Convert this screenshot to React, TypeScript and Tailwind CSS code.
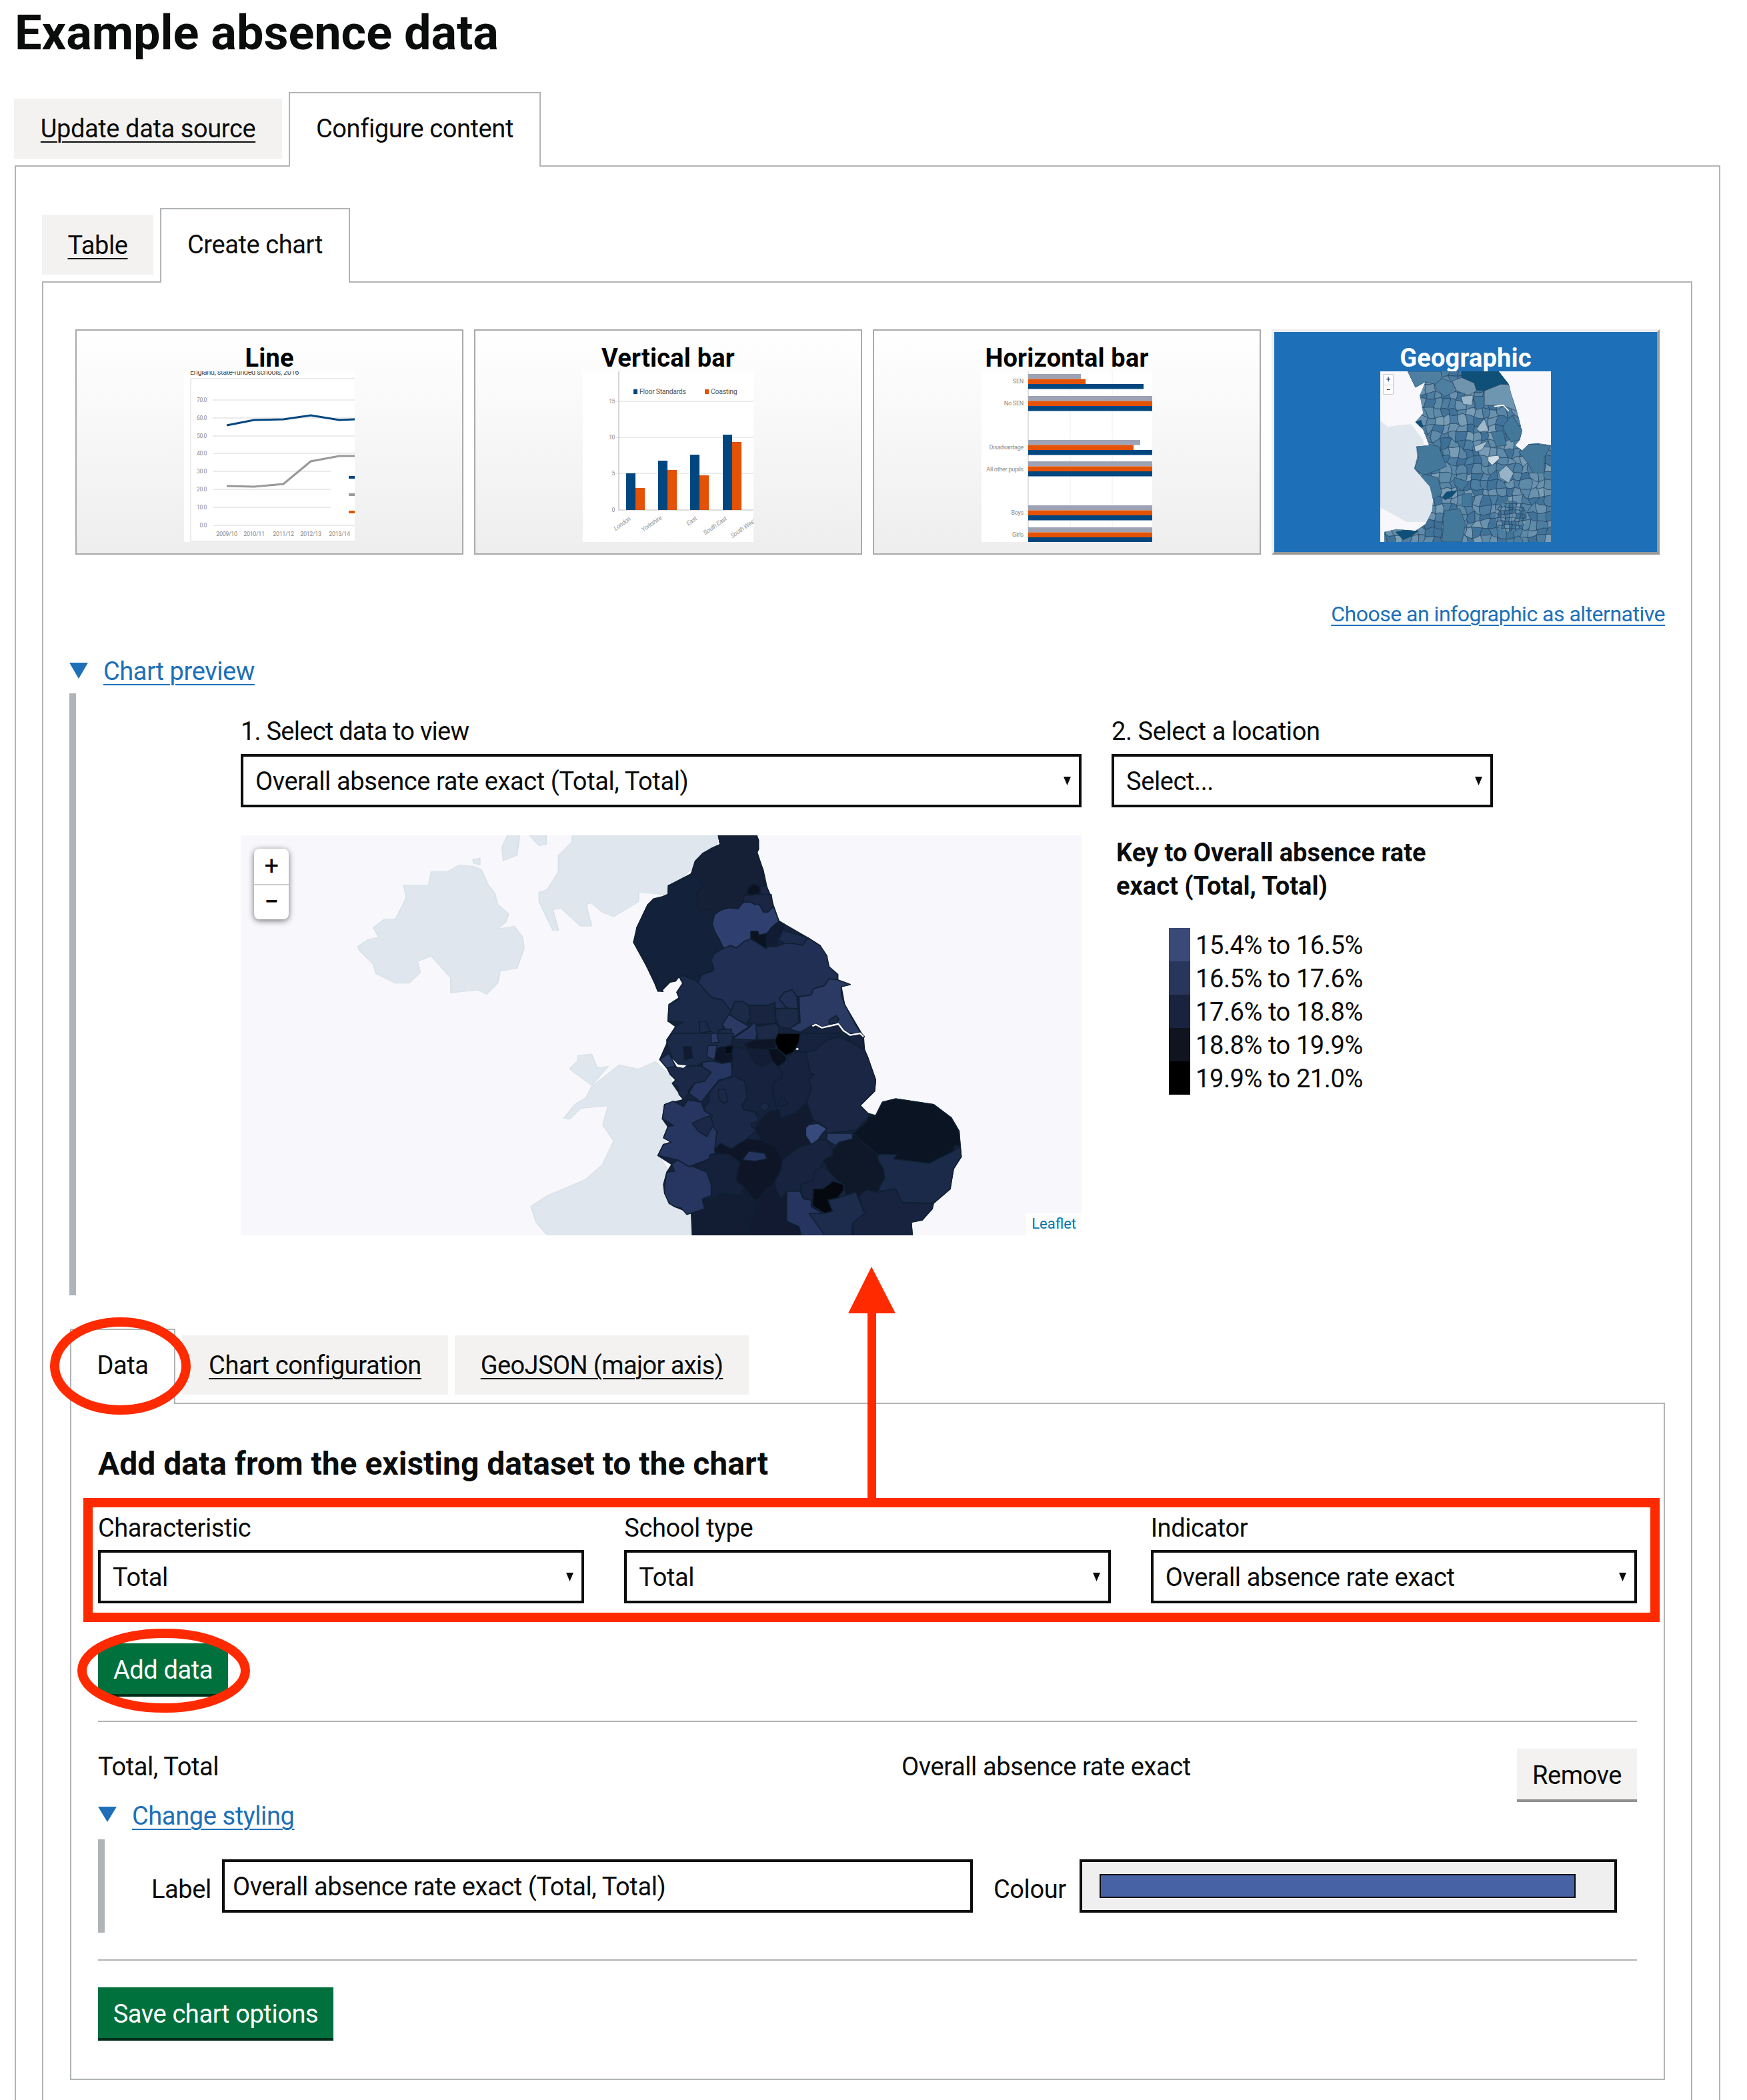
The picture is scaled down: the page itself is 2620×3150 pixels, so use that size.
import React from "react";

const ink = "text-[#0b0c0c]";

function Tri({ className }: { className?: string }) {
  return (
    <svg viewBox="0 0 28 24" preserveAspectRatio="none" className={className}>
      <polygon points="0,0 28,0 14,24" fill="#1d70b8" />
    </svg>
  );
}

function SelectBox({ value, className }: { value: string; className?: string }) {
  return (
    <div className={`flex h-[80px] items-center justify-between border-4 border-[#0b0c0c] bg-white pl-[18px] pr-[12px] text-[38px] ${className ?? ""}`}>
      <span className="pt-[2px]">{value}</span>
      <svg viewBox="0 0 11 13" className="h-[13px] w-[11px]">
        <polygon points="0,0 11,0 5.5,13" fill="#0b0c0c" />
      </svg>
    </div>
  );
}

/* ---------- thumbnails ---------- */
function LineThumb() {
  const grid: [string, number, number][] = [
    ["70.0", 43, 256], ["60.0", 70, 256], ["50.0", 97, 256], ["40.0", 123, 256],
    ["30.0", 150, 220], ["20.0", 177, 220], ["10.0", 204, 220], ["0.0", 231, 256],
  ];
  return (
    <svg viewBox="0 0 256 256" className="h-[256px] w-[256px] bg-white">
      <text x="9" y="4.5" fontSize="11" fill="#444">England, state-funded schools, 2016</text>
      <path d="M10 11H256M10 11V255H256" fill="none" stroke="#e6e6e6" strokeWidth="1.5" />
      {grid.map(([t, y, x2]) => (
        <g key={t}>
          <line x1="43" x2={x2} y1={y} y2={y} stroke="#e4e4e4" strokeWidth="1.5" />
          <text x="34" y={y + 3} fontSize="8.5" fill="#8a8a8a" textAnchor="end">{t}</text>
        </g>
      ))}
      <polyline points="64,81 105,73 149,72 190,66 233,73 256,72" fill="none" stroke="#00467f" strokeWidth="3" />
      <polyline points="64,172 105,173 149,169 190,135 233,127 256,127" fill="none" stroke="#999" strokeWidth="3.2" />
      <rect x="247" y="157" width="9" height="4" fill="#00467f" />
      <rect x="247" y="183" width="9" height="4" fill="#999" />
      <rect x="247" y="209" width="9" height="4" fill="#e35205" />
      {[["2009/10", 64], ["2010/11", 105], ["2011/12", 149], ["2012/13", 190], ["2013/14", 233]].map(([t, x]) => (
        <text key={t as string} x={x as number} y="247" fontSize="9" fill="#8a8a8a" textAnchor="middle">{t}</text>
      ))}
    </svg>
  );
}

function VerticalThumb() {
  const bars = [
    [65, 153, 175], [113, 134, 148], [161, 125, 156], [210, 95, 106],
  ];
  const labels: [string, number, number][] = [
    ["London", 61, 231], ["Yorkshire", 105, 231], ["East", 165, 227], ["South East", 200, 234], ["South West", 242, 238],
  ];
  return (
    <svg viewBox="0 0 256 256" className="h-[256px] w-[256px] overflow-hidden bg-white">
      {[[45, "15"], [99, "10"], [153, "5"]].map(([y, t]) => (
        <g key={t as string}>
          <line x1="50" x2="256" y1={y as number} y2={y as number} stroke="#e6e6e6" strokeWidth="1.5" />
          <text x="48" y={(y as number) + 3} fontSize="8.5" fill="#888" textAnchor="end">{t}</text>
        </g>
      ))}
      <text x="48" y="211" fontSize="8.5" fill="#888" textAnchor="end">0</text>
      <path d="M54 0V208H256" fill="none" stroke="#bbb" strokeWidth="1.2" />
      <rect x="76" y="27" width="6" height="7" fill="#00467f" />
      <text x="85" y="34" fontSize="10.5" letterSpacing="-0.3" fill="#555">Floor Standards</text>
      <rect x="183" y="27" width="6" height="7" fill="#e35205" />
      <text x="192" y="34" fontSize="10.5" letterSpacing="-0.3" fill="#555">Coasting</text>
      {bars.map(([x, a, b]) => (
        <g key={x}>
          <rect x={x} y={a} width="14" height={208 - a} fill="#00467f" />
          <rect x={x + 14} y={b} width="14" height={208 - b} fill="#e35205" />
        </g>
      ))}
      {labels.map(([t, x, y]) => (
        <text key={t} x={x} y={y} fontSize="9.5" fill="#999" fontStyle="italic" textAnchor="middle" transform={`rotate(-35 ${x} ${y})`}>{t}</text>
      ))}
    </svg>
  );
}

function HorizontalThumb() {
  const groups: [number, number, number, number][] = [
    [4, 79, 86, 173], [37, 186, 186, 186], [103, 168, 158, 186], [135, 186, 186, 186], [201, 186, 186, 186], [234, 186, 186, 186],
  ];
  const labels: [string, number][] = [
    ["SEN", 18], ["No SEN", 51], ["Disadvantage", 117], ["All other pupils", 150], ["Boys", 215], ["Girls", 248],
  ];
  return (
    <svg viewBox="0 0 256 256" className="h-[256px] w-[256px] overflow-hidden bg-white">
      <path d="M133 0V256M196 0V256" stroke="#eee" strokeWidth="1" />
      <line x1="70" x2="70" y1="0" y2="256" stroke="#ccc" strokeWidth="1.2" />
      {groups.map(([y, a, b, c]) => (
        <g key={y}>
          <rect x="70" y={y} width={a} height="7.5" fill="#9ea2b5" />
          <rect x="70" y={y + 7.5} width={b} height="7.5" fill="#e35205" />
          <rect x="70" y={y + 15} width={c} height="7.5" fill="#00467f" />
        </g>
      ))}
      {labels.map(([t, y]) => (
        <text key={t} x="63" y={y} fontSize="9" letterSpacing="-0.25" fill="#888" textAnchor="end">{t}</text>
      ))}
    </svg>
  );
}

const h = (a: number, b: number, s: number) => {
  const v = Math.sin(a * 127.1 + b * 311.7 + s * 74.7) * 43758.5453;
  return v - Math.floor(v);
};

function Cells({ s, x0, y0, nx, ny, seed }: { s: number; x0: number; y0: number; nx: number; ny: number; seed: number }) {
  const palette = ["#41739a", "#5f8aa8", "#6a91ad", "#4d7da0", "#41739a", "#3f7097", "#7a9db6", "#5a86a6", "#6a91ad", "#4d7da0"];
  const V = (i: number, j: number) => [x0 + i * s + (h(i, j, seed) - 0.5) * s * 0.6, y0 + j * s + (h(j, i, seed + 1) - 0.5) * s * 0.6];
  const mid = (a: number[], b: number[], k: number) => {
    const t = (h(k, k + 3, seed + 2) - 0.5) * s * 0.35;
    return `${(a[0] + b[0]) / 2 + t},${(a[1] + b[1]) / 2 - t}`;
  };
  const out: React.ReactNode[] = [];
  for (let i = 0; i < nx; i++) {
    for (let j = 0; j < ny; j++) {
      const a = V(i, j), b = V(i + 1, j), c = V(i + 1, j + 1), d = V(i, j + 1);
      const top = mid(a, b, i * 61 + j);
      const bottom = mid(d, c, i * 61 + j + 1);
      const left = mid(a, d, i * 37 + j * 3 + 900);
      const right = mid(b, c, (i + 1) * 37 + j * 3 + 900);
      const pts = `${a} ${top} ${b} ${right} ${c} ${bottom} ${d} ${left}`;
      out.push(<polygon key={`${i}-${j}`} points={pts} fill={palette[Math.floor(h(i, j, seed + 5) * palette.length)]} stroke="#24425e" strokeWidth="2" strokeLinejoin="round" />);
    }
  }
  return <>{out}</>;
}

function GeoThumb() {
  const england = "135,12 545,12 590,70 600,110 628,195 650,280 640,320 620,345 650,368 680,340 720,335 780,345 780,780 30,780 30,735 85,722 170,730 215,700 245,640 250,590 235,530 165,450 178,400 175,350 232,345 205,275 170,240 205,200 190,120 215,60 170,85";
  const big: [string, string][] = [
    ["#0f5078", "378,12 545,12 590,70 555,70 490,100 440,95 435,65 378,40"],
    ["#4f7fa0", "135,12 285,12 290,45 258,70 215,60 170,85"],
    ["#4f7fa0", "258,70 290,45 335,60 355,100 300,125 265,90"],
    ["#7094ae", "335,55 378,40 435,65 445,100 410,120 355,100"],
    ["#6f96b0", "480,100 555,70 590,72 625,190 575,170 530,165 480,165"],
    ["#44789b", "430,125 480,125 478,175 445,185"],
    ["#9cb7c9", "375,125 430,120 425,165 385,160"],
    ["#44789b", "570,250 605,210 650,280 640,320 600,330 565,270"],
    ["#9fb9ca", "445,270 480,225 500,280 460,285"],
    ["#44789b", "510,285 565,280 580,345 535,350"],
    ["#cfdde6", "497,395 545,390 548,405 515,435 497,415"],
    ["#97b3c7", "545,465 580,435 612,470 590,515 550,490"],
    ["#a5bdcd", "435,350 495,325 470,365 440,375"],
    ["#44789b", "175,350 230,340 275,350 290,390 310,440 260,460 210,480 165,450 185,400"],
    ["#44789b", "180,500 210,475 270,490 290,560 250,590 200,570"],
    ["#0f5078", "290,580 310,555 358,548 335,575 305,590"],
    ["#0f5078", "82,735 130,725 185,730 150,755 115,770"],
    ["#0f5078", "170,240 195,232 205,262 182,262"],
    ["#44789b", "635,375 680,340 780,345 750,400 750,470 700,470 680,430"],
    ["#44789b", "300,640 370,630 395,700 380,780 290,780"],
    ["#44789b", "380,565 425,560 425,620 380,620"],
    ["#44789b", "345,490 410,510 380,550 345,520"],
  ];
  return (
    <div className="relative h-[256px] w-[256px] overflow-hidden">
      <svg viewBox="12 12 768 768" className="block h-[256px] w-[256px] bg-[#f7f7fc]">
        <clipPath id="eng"><polygon points={england} /></clipPath>
        <polygon points="12,235 45,262 95,255 150,250 205,320 235,530 250,590 245,640 215,690 130,690 60,650 12,625" fill="#dfe6ee" />
        <g clipPath="url(#eng)">
          <rect x="12" y="12" width="768" height="768" fill="#5f8aa8" />
          <Cells s={36} x0={0} y0={0} nx={24} ny={24} seed={3} />
          <g>
            <clipPath id="ldn"><circle cx="600" cy="665" r="70" /></clipPath>
            <g clipPath="url(#ldn)"><Cells s={16} x0={510} y0={575} nx={12} ny={12} seed={9} /></g>
          </g>
          {big.map(([f, p], i) => (
            <polygon key={i} points={p} fill={f} stroke="#24425e" strokeWidth="2" strokeLinejoin="round" />
          ))}
        </g>
        <polyline points="525,170 565,165 590,190" fill="none" stroke="#fff" strokeWidth="5" />
      </svg>
      <div className="absolute left-[4px] top-[4px] flex h-[31px] w-[16px] flex-col rounded-[1px] border border-[#ccc] bg-white text-center text-[12px] leading-[15px] text-[#222]">
        <span>+</span>
        <span className="border-t border-[#ccc]">−</span>
      </div>
    </div>
  );
}

function Card({ title, active, children }: { title: string; active?: boolean; children: React.ReactNode }) {
  return (
    <div
      className={`flex h-[338px] w-[582px] shrink-0 flex-col items-center ${
        active
          ? "border-4 border-t-[#eeeeee] border-l-[#eeeeee] border-r-[#999999] border-b-[#999999] bg-[#1d70b8] pt-[8px] text-white"
          : "border-2 border-[#aaaaaa] bg-linear-to-b from-white to-[#eeeeee] pt-[10px] text-black"
      }`}
    >
      <div className="h-[51px] text-[38px] font-bold leading-[62px] tracking-[0.2px]">{title}</div>
      {children}
    </div>
  );
}

/* ---------- big map ---------- */
const england =
  "382,-890 555,-890 563,-830 556,-815 585,-730 600,-660 655,-505 785,-430 840,-395 880,-300 920,-240 975,-220 935,-210 950,-130 1035,15 1040,75 1055,110 1090,210 1085,260 1020,325 1055,360 1090,370 1120,310 1180,295 1350,320 1430,380 1465,440 1475,555 1440,610 1425,700 1350,765 1300,840 1250,850 1255,910 265,910 260,810 185,780 140,720 135,680 150,625 172,590 110,550 135,500 170,490 135,470 155,420 130,385 140,320 225,298 175,225 190,210 150,155 118,118 150,45 150,30 190,-30 155,-55 160,-130 205,-160 195,-185 222,-225 205,-255 165,-230 130,-195 110,-190 98,-220 60,-300 0,-410 15,-475 65,-580 155,-625 157,-665 260,-718 278,-775 312,-810 350,-832 390,-850";

const z9: [string, string][] = [
  ["#151f35", "382,10 555,10 563,30 563,70 556,85 566,120 585,170 578,185 597,235 565,240 540,225 515,250 497,280 495,310 470,340 430,335 395,345 365,365 335,340 303,355 278,315 292,295 282,262 315,240 312,225 285,200 260,182 278,125 312,90 350,82 350,68 390,50"],
  ["#14213a", "260,182 285,200 312,225 315,240 282,262 292,295 278,315 303,355 335,340 365,365 355,405 365,440 388,480 405,518 365,540 350,570 362,612 350,620 290,640 262,655 225,640 205,645 190,665 165,670 165,650 130,705 133,712 110,710 98,680 108,640 95,645 60,600 60,570 0,490 15,470 15,425 65,320 90,295 130,285 155,275 157,235 185,235"],
  ["#1a2644", "565,240 597,235 615,275 575,275"],
  ["#1a2644", "497,280 530,278 570,275 620,275 628,325 605,355 585,355 565,320 545,320 525,310 495,310"],
  ["#0b1222", "515,250 540,225 570,240 568,270 530,278 510,270"],
  ["#2f4070", "365,365 395,345 430,335 470,340 495,310 525,310 545,320 565,320 585,355 605,355 630,330 655,395 625,420 600,450 565,460 530,440 528,475 500,485 465,515 435,505 405,518 388,480 365,440 355,405"],
  ["#1c2a4b", "672,435 785,470 760,505 715,495 680,495 650,480"],
  ["#111b33", "600,450 625,420 655,395 680,410 672,440 650,480 645,510 600,510 598,470"],
  ["#0b1222", "528,440 560,440 565,458 600,450 598,520 580,510 560,495 528,475"],
  ["#202f53", "365,540 405,518 435,505 465,515 500,485 528,475 560,495 598,520 600,510 645,510 680,495 715,495 760,505 785,470 840,505 870,550 880,600 920,635 920,660 880,655 860,685 810,700 800,728 735,735 715,705 680,715 655,745 690,787 640,790 635,760 605,775 520,775 490,755 455,755 440,800 400,750 355,740 320,705 290,670 310,635 355,620 362,612 350,570"],
  ["#2a3a63", "920,660 975,680 935,690 935,730 950,770 1010,880 1035,915 1020,900 960,900 920,860 840,875 810,860 750,895 700,880 750,850 745,735 800,728 810,700 860,685 880,655"],
  ["#202f53", "655,745 680,715 715,705 735,735 740,790 690,787"],
  ["#1c2947", "690,787 740,790 745,850 700,880 655,870 640,830 640,790"],
  ["#182440", "520,775 605,775 635,760 640,830 640,855 560,860 520,850 525,830"],
  ["#1c2947", "440,800 455,755 490,755 520,775 525,830 505,860 470,840 430,815"],
  ["#1c2a4a", "160,770 208,745 195,715 222,675 205,645 225,640 262,655 290,670 320,705 355,740 400,750 440,800 400,860 405,880 370,930 150,930 190,870 220,850 155,845"],
  ["#1c2a4a", "295,845 325,845 345,890 300,900"],
  ["#374a7b", "345,890 370,905 370,930 345,930"],
  ["#2a3a63", "400,860 430,815 470,840 505,860 520,870 445,920 410,875"],
  ["#263560", "445,925 520,875 545,850 560,880 550,930"],
  ["#1c2a4a", "380,885 440,880 445,920 400,930"],
  ["#1c2947", "550,870 640,855 655,875 650,930 560,930"],
  ["#17223e", "750,930 805,875 850,880 920,865 975,930"],
  ["#1c2947", "880,840 910,820 925,835 915,855 880,858"],
];

const z10: [string, string][] = [
  ["#1a2643", "775,85 745,80 750,60 870,30 930,15 1040,75 1055,110 1090,210 1085,260 1020,325 1055,360 1060,375 1000,435 870,450 855,425 840,405 808,390 780,310 800,250 790,210 812,185 795,180 790,150"],
  ["#17223e", "745,40 750,0 930,0 935,10 870,30 820,75 775,85 745,80"],
  ["#1c2a4a", "150,45 175,0 450,0 440,50 390,70 360,125 310,130 290,145 230,150 190,130 170,100"],
  ["#111a30", "225,60 260,60 265,110 230,120"],
  ["#2a3a63", "350,0 375,0 385,40 350,45"],
  ["#2a3a63", "335,55 375,55 365,120 330,105"],
  ["#2a3a63", "118,118 160,90 170,110 190,150 150,155"],
  ["#273660", "310,130 360,125 395,135 440,130 445,190 410,205 385,210 340,265 305,310 250,270 275,225 320,215 350,175 310,150"],
  ["#1b2847", "150,155 190,150 230,150 290,145 310,150 350,175 320,215 275,225 245,260 250,270 225,298 205,275 200,240 175,225 190,210 165,185"],
  ["#0c1426", "395,60 440,60 450,50 445,125 400,135 365,120 375,70"],
  ["#050a14", "410,60 450,55 440,90 415,95"],
  ["#0e1526", "500,50 540,30 640,25 640,65 605,75 560,70 530,85"],
  ["#131e36", "510,70 560,70 605,80 625,125 580,150 550,140 530,110"],
  ["#17223e", "445,125 450,60 510,70 530,110 550,140 580,150 625,125 650,150 668,175 665,205 635,215 625,255 640,320 655,345 610,350 580,380 545,350 495,345 488,320 512,290 500,215 455,195 440,205"],
  ["#17223e", "668,175 650,150 690,110 720,85 775,85 790,150 795,180 812,185 790,210 800,250 780,310 750,340 725,360 665,382 645,345 640,320 625,255 635,215 665,205"],
  ["#0a0f1c", "605,70 650,70 690,110 680,130 650,150 625,125"],
  ["#000000", "650,0 750,0 745,40 720,85 685,100 650,70 635,35"],
  ["#1b2847", "340,270 385,215 410,205 455,195 500,215 512,290 488,320 495,345 545,355 565,395 530,405 530,420 555,435 510,475 440,520 390,495 365,525 375,440 345,405 355,370 320,350 320,330 340,310"],
  ["#273660", "130,385 140,320 180,305 225,330 245,300 305,310 320,350 355,370 345,405 375,440 365,525 370,540 345,545 340,565 250,600 200,570 110,550 135,500 170,490 135,470 155,420 180,415 150,395"],
  ["#1b2847", "265,405 305,385 345,370 360,410 330,465 290,440"],
  ["#1b2847", "380,255 410,250 425,305 405,315 385,295"],
  ["#1b2847", "565,330 590,310 615,325 590,355"],
  ["#17223e", "650,305 670,285 695,315 670,330 655,325"],
  ["#273660", "140,690 150,625 185,620 172,590 200,570 250,600 270,600 330,625 350,680 350,730 310,745 320,790 240,815 215,785 185,780 160,765 140,720"],
  ["#15203a", "275,600 340,565 345,545 430,545 480,580 460,660 500,695 480,730 400,720 355,750 350,680 330,625"],
  ["#121c33", "265,810 320,790 310,745 355,750 400,720 480,730 505,700 540,750 550,780 530,830 525,910 265,910"],
  ["#111a30", "530,830 550,780 545,750 600,700 635,670 640,695 665,745 690,710 690,845 745,870 755,910 525,910"],
  ["#263560", "690,710 750,710 765,745 800,750 800,780 850,810 835,830 860,910 755,910 745,870 690,845"],
  ["#0b1422", "1090,370 1120,310 1180,295 1350,320 1430,380 1465,440 1470,510 1445,505 1440,530 1330,585 1170,565 1185,545 1100,545 1045,505 990,450 1050,395 1055,375"],
  ["#17233f", "1015,735 1045,705 1100,715 1180,700 1210,760 1350,765 1345,790 1300,840 1250,850 1255,910 990,910 985,855 1040,810"],
  ["#1b2a48", "1100,545 1185,545 1170,565 1330,585 1440,530 1470,510 1475,555 1440,610 1425,700 1350,765 1210,760 1180,700 1110,710 1105,695 1130,650 1125,610 1100,570"],
  ["#0f1829", "855,570 915,505 990,450 1050,505 1100,545 1100,570 1125,610 1130,650 1105,695 1100,715 1045,705 1015,735 955,725 945,680 915,660 880,620"],
  ["#2a3a63", "870,450 985,450 985,475 925,490 910,505 870,480"],
  ["#111a2e", "545,430 580,380 610,350 655,345 665,382 725,360 750,340 780,310 810,390 775,425 775,460 800,500 750,510 670,570 640,510 575,480"],
  ["#17233f", "670,570 750,510 800,500 830,480 870,480 895,520 895,550 855,570 850,600 815,620 810,660 755,680 750,710 690,710 665,745 640,695 635,670 665,610"],
  ["#374a7b", "775,425 790,410 830,405 870,430 850,450 830,480 800,500 775,460"],
  ["#0d1527", "365,525 390,495 440,520 510,475 575,480 640,510 670,570 660,620 630,680 600,700 560,750 540,750 505,700 460,660 480,580 430,545 370,540"],
  ["#263560", "490,570 520,530 590,540 600,565 550,575"],
  ["#1d2b4c", "790,810 860,810 895,800 875,750 920,740 1000,715 1040,810 985,855 980,910 860,910"],
  ["#17233f", "750,710 755,680 810,660 815,620 850,600 880,620 915,660 945,680 955,725 1000,715 920,740 875,750 860,810 800,775 800,750 765,745"],
  ["#05080f", "810,700 850,700 900,665 945,680 945,705 920,740 875,750 895,800 860,810 805,775"],
];

function UkMap() {
  const poly = (list: [string, string][]) =>
    list.map(([f, p], i) => <polygon key={i} points={p} fill={f} stroke="#0f2032" strokeWidth="4.5" strokeLinejoin="round" />);
  const land = [
    "237,465 255,440 275,430 265,395 285,365 305,365 325,285 320,240 365,240 370,190 400,190 420,165 445,170 460,180 472,235 485,270 490,310 510,345 505,375 490,400 520,390 535,430 538,470 525,545 495,555 490,600 470,640 455,625 405,635 405,580 370,500 345,520 350,560 330,600 305,600 270,565 265,530 240,480",
    "445,145 458,140 458,165 447,160",
    "625,56 890,56 885,95 860,125 845,170 810,240 795,275 745,265 745,300 700,355 680,340 660,305 650,310 660,390 640,390 605,325 590,330 600,405 590,405 565,300 565,265 580,255 600,190 600,130 625,80",
    "508,56 530,56 525,130 500,150 498,100",
    "547,56 578,56 578,90 565,95",
    "635,865 660,860 670,910 690,905 660,975 620,915 635,885",
    "660,980 710,900 745,915 775,888 800,935 820,1030 790,1040 790,1080 805,1130 780,1230 800,1290 790,1350 810,1420 840,1450 840,1526 580,1526 560,1480 550,1420 580,1380 650,1320 680,1265 700,1180 680,1120 690,1050 640,1060 620,1100 610,1095 630,1045 650,1020",
  ];
  return (
    <div className="relative h-[600px] w-[1261px] overflow-hidden bg-[#f7f7fc]">
      <svg viewBox="361 1253 1261 600" className="block h-[600px] w-[1261px]">
        <g transform="translate(340 1230) scale(0.8292 0.4082)">
          {land.map((p, i) => (
            <polygon key={i} points={p} fill="#dfe6ee" stroke="#d5e0e7" strokeWidth="2" />
          ))}
        </g>
        <g transform="translate(950 1550) scale(0.33333)">
          <polygon points={england} fill="#16213b" stroke="#0f2032" strokeWidth="4.5" strokeLinejoin="round" />
        </g>
        <g transform="translate(950 1250) scale(0.33333)">{poly(z9)}</g>
        <g transform="translate(950 1550) scale(0.33333)">
          {poly(z10)}
          <polygon points="175,115 200,140 238,145 225,155 195,150" fill="#fff" />
          <polygon points="735,65 745,70 740,75 730,73" fill="#fff" />
        </g>
        <g transform="translate(950 1250) scale(0.33333)" fill="none" strokeLinejoin="round">
          <polyline points="805,868 820,860 848,875 922,858 945,888 975,908 1020,900 1035,915 1025,930" stroke="#16233e" strokeWidth="12" />
          <polyline points="805,868 820,860 848,875 922,858 945,888 975,908 1020,900 1035,915" stroke="#ffffff" strokeWidth="7" />
        </g>
      </svg>
      <div className="absolute left-[20px] top-[20px] flex h-[106px] w-[52px] flex-col overflow-hidden rounded-[8px] bg-white text-center text-[38px] leading-[52px] text-black shadow-[0_2px_10px_rgba(0,0,0,0.55)]">
        <span className="h-[53px]">+</span>
        <span className="h-[53px] border-t-2 border-[#cccccc] font-medium leading-[48px]">−</span>
      </div>
      <div className="absolute bottom-0 right-0 bg-white/80 px-[8px] py-[4px] text-[22px] leading-[26px] tracking-normal text-[#0078a8]">Leaflet</div>
    </div>
  );
}

const legend: [string, string][] = [
  ["#394a78", "15.4% to 16.5%"],
  ["#28365c", "16.5% to 17.6%"],
  ["#1a233e", "17.6% to 18.8%"],
  ["#0f141f", "18.8% to 19.9%"],
  ["#000000", "19.9% to 21.0%"],
];

export default function App() {
  return (
    <div className={`relative h-[3150px] w-[2620px] overflow-hidden bg-white text-[38px] tracking-[-0.4px] ${ink} font-['Roboto',sans-serif]`}>
      <h1 className="h-[138px] pl-[22px] text-[72px] font-bold leading-[100px] tracking-normal">Example absence data</h1>

      {/* top tabs */}
      <div className="flex items-start gap-[10px] pl-[21px]">
        <div className="mt-[10px] flex h-[90px] w-[402px] items-center justify-center bg-[#f3f2f1] underline decoration-2 underline-offset-[6px]">Update data source</div>
        <div className="relative z-10 -mb-[2px] flex h-[112px] w-[378px] items-start justify-center border-2 border-b-0 border-[#b1b4b6] bg-white pt-[25px]">Configure content</div>
      </div>

      {/* outer panel */}
      <div className="ml-[22px] h-[2950px] w-[2558px] border-2 border-[#b1b4b6] px-[39px] pt-[62px]">
        <div className="flex items-start gap-[10px]">
          <div className="mt-[10px] flex h-[90px] w-[167px] items-center justify-center bg-[#f3f2f1] pt-[2px] underline decoration-2 underline-offset-[6px]">Table</div>
          <div className="relative z-10 -mb-[2px] flex h-[112px] w-[285px] items-start justify-center border-2 border-b-0 border-[#b1b4b6] bg-white pt-[25px]">Create chart</div>
        </div>

        {/* inner panel */}
        <div className="h-[2800px] w-[2475px] border-2 border-[#b1b4b6] px-[39px] pt-[70px]">
          <div className="mx-[9px] flex gap-[16px]">
            <Card title="Line"><LineThumb /></Card>
            <Card title="Vertical bar"><VerticalThumb /></Card>
            <Card title="Horizontal bar"><HorizontalThumb /></Card>
            <Card title="Geographic" active><GeoThumb /></Card>
          </div>

          <div className="mt-[67px] flex h-[44px] items-center justify-end text-[32px] tracking-[-0.5px] text-[#1d70b8] underline decoration-2 underline-offset-[5px]">Choose an infographic as alternative</div>

          <div className="mt-[38px] flex h-[50px] items-center">
            <Tri className="h-[24px] w-[28px]" />
            <span className="ml-[23px] pt-[2px] text-[#1d70b8] underline decoration-2 underline-offset-[6px]">Chart preview</span>
          </div>

          {/* chart preview */}
          <div className="mt-[9px] h-[903px] border-l-[10px] border-[#b1b4b6] pl-[247px] pt-[35px]">
            <div className="flex gap-[45px]">
              <div className="w-[1261px]">
                <div className="h-[40px] pt-[2px] leading-[40px] tracking-[-0.75px]">1. Select data to view</div>
                <SelectBox className="mt-[16px]" value="Overall absence rate exact (Total, Total)" />
              </div>
              <div className="w-[572px]">
                <div className="h-[40px] pt-[2px] leading-[40px]">2. Select a location</div>
                <SelectBox className="mt-[16px]" value="Select..." />
              </div>
            </div>
            <div className="mt-[42px] flex">
              <UkMap />
              <div className="ml-[52px]">
                <div className="w-[520px] pt-[1px] text-[38px] font-bold leading-[50px] tracking-normal">Key to Overall absence rate exact (Total, Total)</div>
                <div className="ml-[79px] mt-[38px]">
                  {legend.map(([c, t]) => (
                    <div key={t} className="flex h-[50px] items-center">
                      <div className="h-[50px] w-[32px]" style={{ backgroundColor: c }} />
                      <span className="ml-[8px] pt-[2px]">{t}</span>
                    </div>
                  ))}
                </div>
              </div>
            </div>
          </div>

          {/* data tabs */}
          <div className="mt-[50px] flex items-start gap-[10px] pl-[1px]">
            <div className="relative z-10 -mb-[2px] flex h-[113px] w-[158px] items-start justify-center border-2 border-b-0 border-[#b1b4b6] bg-white pt-[25px]">Data</div>
            <div className="mt-[10px] flex h-[89px] w-[399px] items-center justify-center bg-[#f3f2f1] pt-[2px] underline decoration-2 underline-offset-[6px]">Chart configuration</div>
            <div className="mt-[10px] flex h-[89px] w-[441px] items-center justify-center bg-[#f3f2f1] pt-[2px] tracking-[-0.6px] underline decoration-2 underline-offset-[6px]">GeoJSON (major axis)</div>
          </div>

          <div className="ml-[1px] h-[1016px] w-[2392px] border-2 border-[#b1b4b6] px-[40px] pt-[58px]">
            <h2 className="h-[60px] pt-[2px] text-[48px] font-bold leading-[60px] tracking-normal">Add data from the existing dataset to the chart</h2>
            <div className="mt-[46px] grid grid-cols-3 gap-[60px]">
              {[["Characteristic", "Total"], ["School type", "Total"], ["Indicator", "Overall absence rate exact"]].map(([l, v]) => (
                <div key={l}>
                  <div className="h-[40px] pt-[2px] leading-[40px]">{l}</div>
                  <SelectBox className="mt-[15px]" value={v} />
                </div>
              ))}
            </div>
            <div className="mt-[60px] flex h-[80px] w-[195px] items-center justify-center border-b-4 border-[#002d18] bg-[#00703c] pt-[4px] text-white">Add data</div>
            <div className="mt-[36px] h-[2px] bg-[#b1b4b6]" />
            <div className="mt-[40px] grid h-[80px] grid-cols-[1205px_1fr_180px] items-start">
              <div className="mt-[7px] h-[40px] leading-[40px]">Total, Total</div>
              <div className="mt-[7px] h-[40px] leading-[40px]">Overall absence rate exact</div>
              <div className="flex h-[80px] items-center justify-center border-b-4 border-[#929191] bg-[#f3f2f1] pt-[4px]">Remove</div>
            </div>
            <div className="flex h-[46px] items-start">
              <Tri className="mt-[7px] h-[23px] w-[28px]" />
              <span className="ml-[23px] mt-[1px] h-[40px] leading-[40px] text-[#1d70b8] underline decoration-2 underline-offset-[6px]">Change styling</span>
            </div>
            <div className="mt-[10px] h-[140px] border-l-[10px] border-[#b1b4b6] pl-[70px] pt-[30px]">
              <div className="flex items-start">
                <div className="mt-[25px] h-[40px] w-[106px] leading-[40px]">Label</div>
                <div className="flex h-[80px] w-[1126px] items-center border-4 border-[#0b0c0c] pl-[12px] pt-[2px]">Overall absence rate exact (Total, Total)</div>
                <div className="ml-[31px] mt-[25px] h-[40px] w-[129px] leading-[40px]">Colour</div>
                <div className="flex h-[80px] w-[806px] items-center border-4 border-[#0b0c0c] bg-[#efefef] pl-[26px]">
                  <div className="h-[36px] w-[714px] border-2 border-[#0b0c0c] bg-[#4763a5]" />
                </div>
              </div>
            </div>
            <div className="mt-[40px] h-[2px] bg-[#b1b4b6]" />
            <div className="mt-[40px] flex h-[80px] w-[353px] items-center justify-center border-b-4 border-[#002d18] bg-[#00703c] pt-[4px] text-white">Save chart options</div>
          </div>
        </div>
      </div>

      {/* annotations */}
      <svg viewBox="0 0 2620 3150" className="pointer-events-none absolute left-0 top-0 z-20 h-[3150px] w-[2620px]">
        <rect x="132" y="2254" width="2350" height="172" fill="none" stroke="#ff2a00" strokeWidth="14" />
        <rect x="1301" y="1968" width="13" height="279" fill="#ff2a00" />
        <polygon points="1272,1970 1343,1970 1307,1900" fill="#ff2a00" />
        <ellipse cx="180.5" cy="2049" rx="98.5" ry="66" fill="none" stroke="#ff2a00" strokeWidth="14" />
        <ellipse cx="245.5" cy="2506" rx="122.5" ry="56" fill="none" stroke="#ff2a00" strokeWidth="14" />
      </svg>
    </div>
  );
}
